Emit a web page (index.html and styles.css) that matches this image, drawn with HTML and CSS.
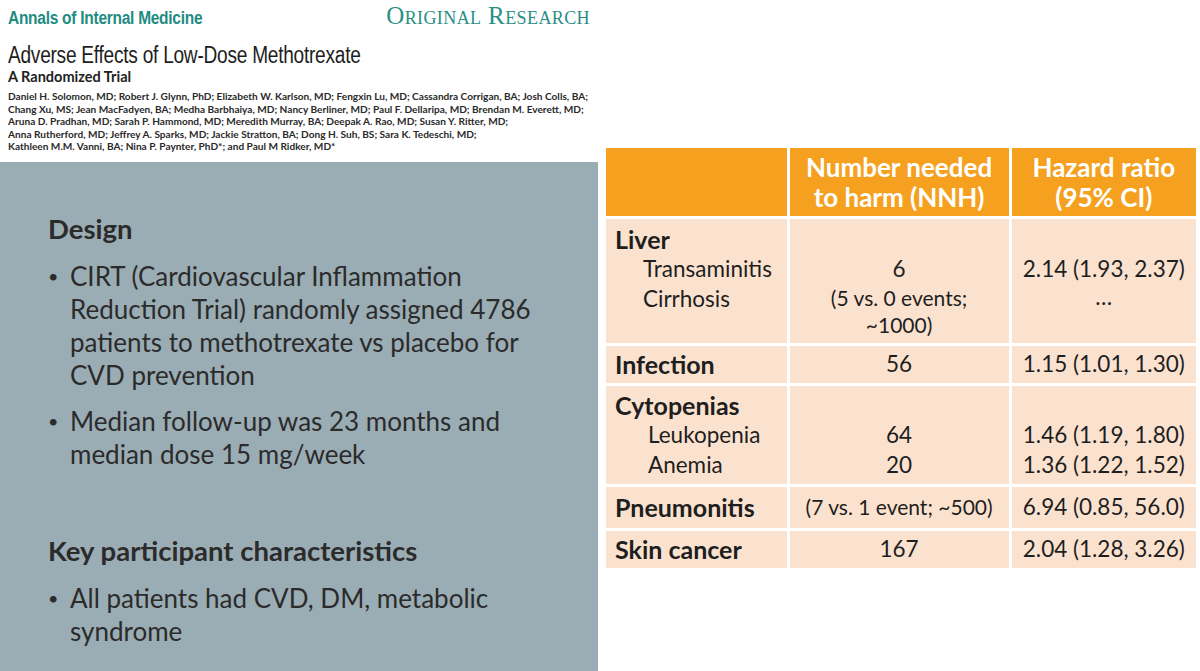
FILE: index.html
```html
<!DOCTYPE html>
<html lang="en">
<head>
<meta charset="utf-8">
<title>Adverse Effects of Low-Dose Methotrexate</title>
<link rel="stylesheet" href="styles.css">
</head>
<body>
<div class="page">
  <div class="left">
    <header class="article">
      <div class="masthead">
        <span class="journal">Annals of Internal Medicine</span>
        <span class="section">Original Research</span>
      </div>
      <h1 class="title">Adverse Effects of Low-Dose Methotrexate</h1>
      <div class="subtitle">A Randomized Trial</div>
      <p class="authors">Daniel H. Solomon, MD; Robert J. Glynn, PhD; Elizabeth W. Karlson, MD; Fengxin Lu, MD; Cassandra Corrigan, BA; Josh Colls, BA;<br>Chang Xu, MS; Jean MacFadyen, BA; Medha Barbhaiya, MD; Nancy Berliner, MD; Paul F. Dellaripa, MD; Brendan M. Everett, MD;<br>Aruna D. Pradhan, MD; Sarah P. Hammond, MD; Meredith Murray, BA; Deepak A. Rao, MD; Susan Y. Ritter, MD;<br>Anna Rutherford, MD; Jeffrey A. Sparks, MD; Jackie Stratton, BA; Dong H. Suh, BS; Sara K. Tedeschi, MD;<br>Kathleen M.M. Vanni, BA; Nina P. Paynter, PhD*; and Paul M Ridker, MD*</p>
    </header>
    <section class="summary">
      <h2>Design</h2>
      <ul>
        <li>CIRT (Cardiovascular Inflammation Reduction Trial) randomly assigned 4786 patients to methotrexate vs placebo for CVD prevention</li>
        <li>Median follow-up was 23 months and median dose 15 mg/week</li>
      </ul>
      <h2 class="second">Key participant characteristics</h2>
      <ul>
        <li>All patients had CVD, DM, metabolic syndrome</li>
      </ul>
    </section>
  </div>
  <div class="right">
    <table class="results">
      <thead>
        <tr class="head">
          <th class="c1"></th>
          <th class="c2">Number needed<br>to harm (NNH)</th>
          <th class="c3">Hazard ratio<br>(95% CI)</th>
        </tr>
      </thead>
      <tbody>
        <tr class="r-liver">
          <td class="c1"><div class="cat">Liver</div><div class="sub">Transaminitis</div><div class="sub">Cirrhosis</div></td>
          <td class="c2"><div class="gap"></div><div>6</div><div class="small">(5 vs. 0 events;</div><div class="small">~1000)</div></td>
          <td class="c3"><div class="gap"></div><div>2.14 (1.93, 2.37)</div><div class="dots">…</div></td>
        </tr>
        <tr class="r-one">
          <td class="c1"><div class="cat">Infection</div></td>
          <td class="c2">56</td>
          <td class="c3">1.15 (1.01, 1.30)</td>
        </tr>
        <tr class="r-cyto">
          <td class="c1"><div class="cat">Cytopenias</div><div class="sub sub2">Leukopenia</div><div class="sub sub2">Anemia</div></td>
          <td class="c2"><div class="gap"></div><div>64</div><div>20</div></td>
          <td class="c3"><div class="gap"></div><div>1.46 (1.19, 1.80)</div><div>1.36 (1.22, 1.52)</div></td>
        </tr>
        <tr class="r-pneu">
          <td class="c1"><div class="cat">Pneumonitis</div></td>
          <td class="c2"><span class="small">(7 vs. 1 event; ~500)</span></td>
          <td class="c3">6.94 (0.85, 56.0)</td>
        </tr>
        <tr class="r-one">
          <td class="c1"><div class="cat">Skin cancer</div></td>
          <td class="c2">167</td>
          <td class="c3">2.04 (1.28, 3.26)</td>
        </tr>
      </tbody>
    </table>
  </div>
</div>
</body>
</html>
```
FILE: styles.css
```css
* { box-sizing: border-box; }
html, body { margin: 0; padding: 0; background: #ffffff; }
body { font-family: Lato, "Open Sans", sans-serif; color: #262626; }

.page {
  display: grid;
  grid-template-columns: 598px 1fr;
  width: 1200px;
  height: 671px;
  overflow: hidden;
}

.left { display: flex; flex-direction: column; }

.article { height: 162px; padding: 2px 8px 0 8px; }
.masthead { display: flex; justify-content: space-between; align-items: baseline; height: 26px; }
.journal {
  display: inline-block;
  font-family: "Liberation Sans", Arial, sans-serif;
  font-weight: bold;
  font-size: 18px;
  letter-spacing: -0.3px;
  color: #1f8c82;
  transform: scaleX(0.86);
  transform-origin: left center;
  white-space: nowrap;
}
.section {
  font-family: "Liberation Serif", "Times New Roman", serif;
  font-variant: small-caps;
  font-size: 25px;
  color: #2a8f86;
  letter-spacing: 0.4px;
  margin-right: 0;
}
.title {
  display: inline-block;
  margin: 15px 0 0 0;
  font-family: "Liberation Sans", Arial, sans-serif;
  font-weight: normal;
  font-size: 23px;
  line-height: 24px;
  letter-spacing: -0.3px;
  color: #1e1e1e;
  transform: scaleX(0.83);
  transform-origin: left center;
  white-space: nowrap;
}
.subtitle {
  margin-top: 2px;
  font-family: Lato, sans-serif;
  font-weight: bold;
  font-size: 14.5px;
  line-height: 16px;
  color: #222;
}
.authors {
  margin: 5px 0 0 0;
  font-family: Lato, sans-serif;
  font-weight: bold;
  font-size: 10.1px;
  line-height: 12.6px;
  color: #2a2a2a;
  white-space: nowrap;
}

.summary {
  flex: 1;
  background: #9badb4;
  padding: 50px 30px 0 48px;
}
.summary h2 {
  margin: 0;
  font-family: Lato, sans-serif;
  font-weight: bold;
  font-size: 27.5px;
  line-height: 34px;
  color: #2b2b2b;
}
.summary h2.second { margin-top: 63px; }
.summary ul {
  list-style: none;
  margin: 14px 0 0 0;
  padding: 0;
}
.summary li {
  position: relative;
  padding-left: 22px;
  font-size: 26px;
  line-height: 33px;
  color: #2b2b2b;
  margin-bottom: 13px;
}
.summary li::before {
  content: "•";
  position: absolute;
  left: 0;
  top: 0;
  font-size: 18px;
}

.right { padding: 145px 4px 0 5px; }
.results {
  border-collapse: separate;
  border-spacing: 3px;
  width: 596px;
  font-family: Lato, sans-serif;
  font-size: 22.5px;
  color: #1e1e1e;
}
.results th {
  background: #f5a11f;
  color: #ffffff;
  font-weight: bold;
  font-size: 26px;
  line-height: 30px;
  height: 68px;
  text-align: center;
  padding: 2px 2px;
  white-space: nowrap;
}
.results td {
  background: #fbe2cf;
  vertical-align: top;
  text-align: center;
  line-height: 30px;
  padding: 4px 4px;
  white-space: nowrap;
}
.results .c1 { width: 181px; text-align: left; padding-left: 9px; }
.results .c2 { width: 220px; }
.results .c3 { width: 185px; }
.results .cat { font-weight: bold; font-size: 25px; }
.results .sub { padding-left: 28px; }
.results .sub.sub2 { padding-left: 33px; }
.results .gap { height: 30px; }
.results .small { font-size: 21px; line-height: 27px; }
.results .dots { line-height: 26px; }
.r-liver td { height: 124px; padding-top: 5px; }
.r-one td { height: 37px; vertical-align: middle; padding-top: 0; padding-bottom: 2px; }
.r-cyto td { height: 97px; }
.r-pneu td { height: 41px; vertical-align: middle; padding-top: 0; padding-bottom: 2px; }
```
